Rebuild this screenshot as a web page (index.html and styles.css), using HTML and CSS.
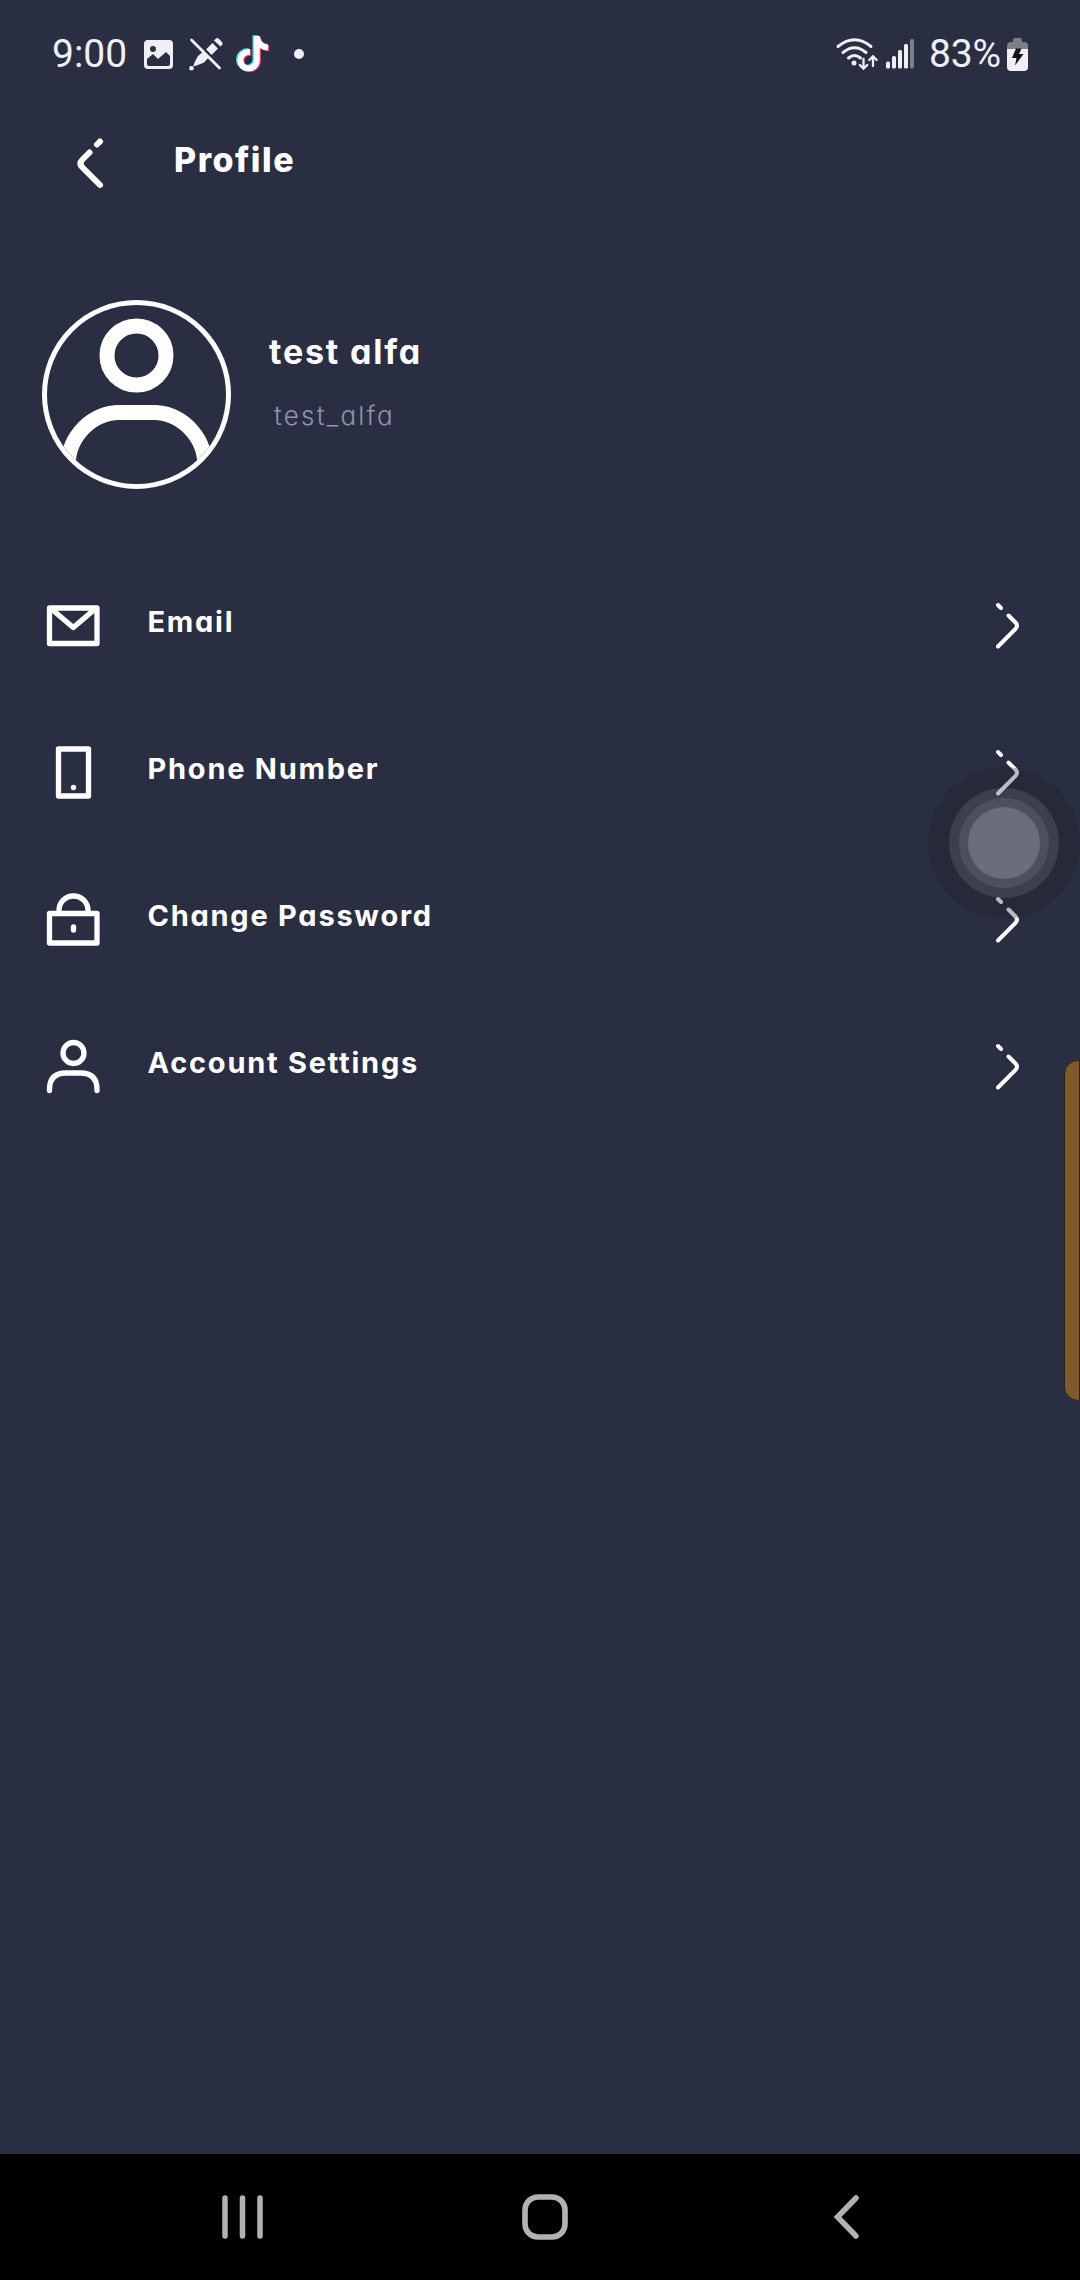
FILE: index.html
```html
<!DOCTYPE html>
<html lang="en">
<head>
<meta charset="utf-8">
<title>Profile</title>
<link rel="stylesheet" href="styles.css">
</head>
<body>
<svg class="defs" aria-hidden="true">
  <symbol id="chevron" viewBox="0 0 24 48"><path d="M2 3l3 3M12.500 13.500l7 7q3 3 0 6.500L2 44.500" fill="none" stroke="#fff" stroke-width="4" stroke-linecap="round"/></symbol>
  <symbol id="note" viewBox="0 0 448 512"><path d="M448 209.900a210.100 210.100 0 0 1-122.800-39.300v178.800A162.600 162.600 0 1 1 185 188.300v89.900a74.600 74.600 0 1 0 52.200 71.200V0h88a121.200 121.200 0 0 0 1.900 22.200A122.200 122.200 0 0 0 381 102.400a121.400 121.400 0 0 0 67 20.100z"/></symbol>
</svg>
<div class="screen">
  <div class="status">
    <span class="clock">9:00</span>
    <svg class="s-image" viewBox="0 0 29 29"><rect width="29" height="29" rx="4" fill="#f0f0f4"/><circle cx="9" cy="9" r="3" fill="#2a2e42"/><path d="M3 19l6-5 5 5 8-7 4 4v8q0 2-2 2H5q-2 0-2-2z" fill="#2a2e42"/></svg>
    <svg class="s-pen" viewBox="0 0 34 34"><g fill="#f0f0f4"><path d="M17 12.500L23.500 6l5.500 5.500-6.500 6.500zM15.500 13.500L9 19Q6.500 23 4 29.500 11 27.500 15 25.500L21 19z"/><path d="M25 3.500l2-2q1.500-1 3 .5l3 3q1.300 1.500 0 3l-1.500 1.500z"/><circle cx="2.500" cy="31.300" r="2.300"/></g><path d="M4 1.500L32 29.500" stroke="#2a2e42" stroke-width="3"/><path d="M2.500 3L30.500 31" stroke="#f0f0f4" stroke-width="2.800" stroke-linecap="round"/></svg>
    <svg class="s-tiktok" viewBox="0 0 34 38"><use href="#note" x="0" y="0" width="31" height="36" fill="#25e5e0"/><use href="#note" x="2.500" y="1.500" width="31" height="36" fill="#e8335a"/><use href="#note" x="1.300" y=".8" width="31" height="36" fill="#fff"/></svg>
    <span class="dot"></span>
    <span class="spacer"></span>
    <svg class="s-wifi" viewBox="0 0 43 33"><g fill="none" stroke="#f0f0f4" stroke-width="3" stroke-linecap="round"><path d="M2 8.500Q18.500-5 35 8.500M7 14.500q11.500-9.500 23 0M12.500 20q6-5 12 0"/><path d="M27.500 21v9M23.800 27l3.700 3.700 3.700-3.700M37 28v-9M33.300 22l3.700-3.700 3.700 3.700" stroke-width="2.300"/></g><circle cx="18" cy="25" r="2.500" fill="#f0f0f4"/></svg>
    <svg class="s-signal" viewBox="0 0 28 30"><g fill="#f0f0f4"><rect y="22.500" width="4" height="7" rx="1.500"/><rect x="6" y="17" width="4" height="12.500" rx="1.500"/><rect x="12" y="11" width="4" height="18.500" rx="1.500"/><rect x="18" y="5" width="4" height="24.500" rx="1.500"/></g><rect x="24" width="4" height="29.500" rx="1.500" fill="#7c7e8a"/></svg>
    <span class="percent">83%</span>
    <svg class="s-battery" viewBox="0 0 21 33"><path d="M0 11V8q0-4 4-4h2V2q0-2 2-2h5q2 0 2 2v2h2q4 0 4 4v3z" fill="#7c7e8a"/><path d="M0 11h21v18q0 4-4 4H4q-4 0-4-4z" fill="#f0f0f4"/><path d="M9 10.500h5.500L12 16h4.500L8 27.500 9.500 20H5z" fill="#151515"/></svg>
  </div>
  <header class="header">
    <svg class="back" viewBox="0 0 26 50"><path d="M19 5.500l3-3M11.500 13.500l-7 7q-4 4 0 8l17.500 17.500" fill="none" stroke="#fff" stroke-width="6" stroke-linecap="round"/></svg>
    <h1 class="title">Profile</h1>
  </header>
  <section class="user">
    <div class="avatar"><svg viewBox="0 0 179 179"><g fill="none" stroke="#fff" stroke-width="15"><circle cx="89.500" cy="50.500" r="29.500"/><path d="M21.500 172v-6A53 53 0 0 1 70 107.500H109A53 53 0 0 1 157.500 166v6"/></g></svg></div>
    <div class="names"><div class="name">test alfa</div><div class="handle">test_alfa</div></div>
  </section>
  <nav class="menu">
    <a class="row"><svg class="icon" viewBox="0 0 54 54"><g fill="none" stroke="#fff" stroke-width="5.300" stroke-linejoin="round"><path d="M2.500 9h47.500v35.500H2.500zM4.500 10l21.800 18.500L48 10"/></g></svg><span class="label">Email</span><svg class="chev"><use href="#chevron"/></svg></a>
    <a class="row"><svg class="icon" viewBox="0 0 54 54"><path d="M11.500 3h30v47h-30z" fill="none" stroke="#fff" stroke-width="5.300" stroke-linejoin="round"/><circle cx="26.500" cy="41.500" r="2.700" fill="#fff"/></svg><span class="label">Phone Number</span><svg class="chev"><use href="#chevron"/></svg></a>
    <a class="row"><svg class="icon" viewBox="0 0 54 54"><path d="M2.500 20.500h47.500V50H2.500zM12 20v-2.500a14.500 14.500 0 0 1 29 0V20" fill="none" stroke="#fff" stroke-width="5.300" stroke-linejoin="round"/><path d="M26.500 34v3" stroke="#fff" stroke-width="5.300" stroke-linecap="round"/></svg><span class="label">Change Password</span><svg class="chev"><use href="#chevron"/></svg></a>
    <a class="row"><svg class="icon" viewBox="0 0 54 54"><g fill="none" stroke="#fff" stroke-width="5.300" stroke-linecap="round"><circle cx="26.500" cy="13" r="10.500"/><path d="M2.500 50.500v-1Q2.500 33 19 33H33.500Q50 33 50 49.500v1"/></g></svg><span class="label">Account Settings</span><svg class="chev"><use href="#chevron"/></svg></a>
  </nav>
  <div class="navbar">
    <svg class="n-recents" viewBox="0 0 42 44"><path d="M3 3v38M20.500 3v38M38 3v38" stroke="#b2b2b2" stroke-width="5.500" stroke-linecap="round"/></svg>
    <svg class="n-home" viewBox="0 0 46 46"><rect x="3" y="3" width="40" height="40" rx="13" fill="none" stroke="#b2b2b2" stroke-width="5.600"/></svg>
    <svg class="n-back" viewBox="0 0 26 44"><path d="M23 3L4.500 22 23 41" fill="none" stroke="#b2b2b2" stroke-width="5.500" stroke-linecap="round"/></svg>
  </div>
  <div class="assist"><div class="ring"><div class="ring2"><div class="core"></div></div></div></div>
  <div class="edge"></div>
</div>
</body>
</html>
```
FILE: styles.css
```css
* { box-sizing: border-box; }
body { margin: 0; background: #2a2e42; color: #fff; font-family: Inter, sans-serif; font-feature-settings: "cv11"; }
svg { display: block; flex: none; overflow: visible; }
.defs { display: none; }
.screen { position: relative; width: 1080px; height: 2280px; overflow: hidden; display: flex; flex-direction: column; }

.status { height: 108px; padding: 0 52px 0 52px; display: flex; align-items: center; font: 39px/46px Roboto, sans-serif; color: #f0f0f4; }
.clock { width: 92px; }
.s-image { width: 29px; height: 29px; }
.s-pen { width: 34px; height: 34px; margin-left: 16px; }
.s-tiktok { width: 34px; height: 38px; margin-left: 13px; }
.dot { width: 10px; height: 10px; margin-left: 24px; border-radius: 50%; background: #f0f0f4; }
.spacer { flex: 1; }
.s-wifi { width: 43px; height: 33px; margin-right: 7px; }
.s-signal { width: 28px; height: 30px; margin-right: 15px; }
.percent { width: 78px; letter-spacing: -0.2px; }
.s-battery { width: 21px; height: 33px; }

.header { height: 130px; padding: 31px 0 0 78px; display: flex; align-items: flex-start; border-bottom: 1px solid #272a3c; }
.back { width: 26px; height: 50px; }
.title { margin: 0 0 0 70px; font-size: 34px; line-height: 42px; font-weight: 800; letter-spacing: 1.5px; }

.user { padding: 62px 0 0 42px; height: 314px; display: flex; }
.avatar { width: 189px; height: 189px; border: 5px solid #fff; border-radius: 50%; overflow: hidden; }
.avatar svg { width: 179px; height: 179px; }
.names { padding: 32px 0 0 38px; }
.name { font-size: 34px; line-height: 40px; font-weight: 700; letter-spacing: 1.8px; }
.handle { margin: 28px 0 0 5px; font-size: 26px; line-height: 32px; font-weight: 300; letter-spacing: 2.2px; color: #9094b0; }

.menu { flex: 1; }
.row { height: 147px; padding: 0 60px 0 47px; display: flex; align-items: center; }
.icon { width: 54px; height: 54px; }
.label { flex: 1; margin: -7px 0 0 46.5px; font-size: 29px; line-height: 36px; font-weight: 700; letter-spacing: 1.75px; white-space: nowrap; }
.chev { width: 24px; height: 48px; }

.navbar { height: 126px; padding: 0 221px 0 222px; background: #000; display: flex; align-items: center; }
.n-recents { width: 42px; height: 44px; }
.n-home { width: 46px; height: 46px; margin: 0 auto 0 257.5px; }
.n-back { width: 26px; height: 44px; }

/* Floating touch assistant and edge panel handle sit above the page */
.assist { position: absolute; left: 928px; top: 767px; width: 152px; height: 152px; border-radius: 50%; background: rgba(29,29,30,.3); display: grid; place-items: center; }
.ring { width: 110px; height: 110px; border-radius: 50%; background: rgba(245,248,255,.11); display: grid; place-items: center; }
.ring2 { width: 90px; height: 90px; border-radius: 50%; background: #4d4f5d; display: grid; place-items: center; }
.core { width: 72px; height: 72px; border-radius: 50%; background: #6b6d7c; }
.edge { position: absolute; left: 1064px; top: 1060px; width: 16px; height: 341px; border: 1px solid #29231f; border-radius: 14px 0 0 14px; background: #805a2a; }
```
